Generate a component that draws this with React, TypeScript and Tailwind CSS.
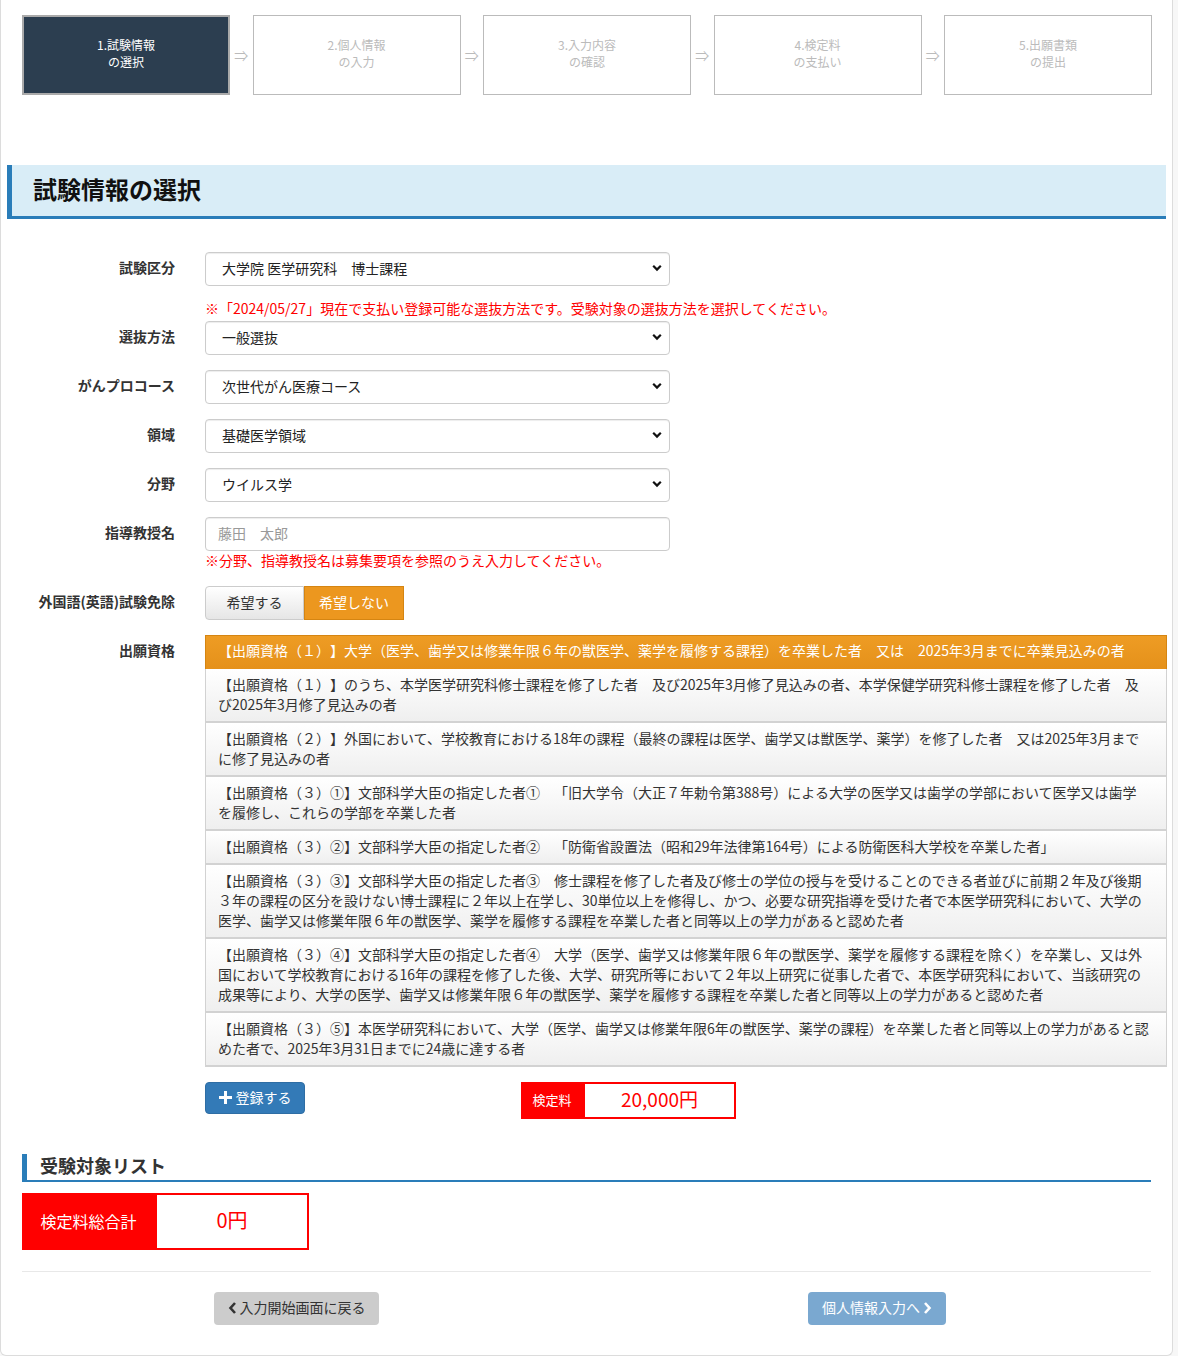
import React from "react";

const font = { fontFamily: '"Noto Sans CJK JP", "Noto Sans", sans-serif' };

function Chevron() {
  return (
    <svg width="10" height="8" viewBox="0 0 10 8" className="shrink-0">
      <path d="M1.2 1.8 L5 5.6 L8.8 1.8" fill="none" stroke="#111" strokeWidth="2.2" />
    </svg>
  );
}

function SelectBox({ value }: { value: string }) {
  return (
    <div className="w-[465px] h-[34px] border border-[#ccc] rounded-[4px] bg-white flex items-center justify-between pl-[16px] pr-[7px] pb-[2px] text-[14px] text-[#222] shadow-[inset_0_1px_1px_rgba(0,0,0,0.075)]">
      <span>{value}</span>
      <Chevron />
    </div>
  );
}

function Label({ children }: { children: React.ReactNode }) {
  return (
    <div className="w-[174px] shrink-0 text-right font-bold text-[14px] text-[#333] leading-[30px]">
      {children}
    </div>
  );
}

const steps = [
  ["1.試験情報", "の選択"],
  ["2.個人情報", "の入力"],
  ["3.入力内容", "の確認"],
  ["4.検定料", "の支払い"],
  ["5.出願書類", "の提出"],
];

const quals: { text: string; active?: boolean }[] = [
  { text: "【出願資格（１）】大学（医学、歯学又は修業年限６年の獣医学、薬学を履修する課程）を卒業した者　又は　2025年3月までに卒業見込みの者", active: true },
  { text: "【出願資格（１）】のうち、本学医学研究科修士課程を修了した者　及び2025年3月修了見込みの者、本学保健学研究科修士課程を修了した者　及び2025年3月修了見込みの者" },
  { text: "【出願資格（２）】外国において、学校教育における18年の課程（最終の課程は医学、歯学又は獣医学、薬学）を修了した者　又は2025年3月までに修了見込みの者" },
  { text: "【出願資格（３）①】文部科学大臣の指定した者①　「旧大学令（大正７年勅令第388号）による大学の医学又は歯学の学部において医学又は歯学\nを履修し、これらの学部を卒業した者" },
  { text: "【出願資格（３）②】文部科学大臣の指定した者②　「防衛省設置法（昭和29年法律第164号）による防衛医科大学校を卒業した者」" },
  { text: "【出願資格（３）③】文部科学大臣の指定した者③　修士課程を修了した者及び修士の学位の授与を受けることのできる者並びに前期２年及び後期３年の課程の区分を設けない博士課程に２年以上在学し、30単位以上を修得し、かつ、必要な研究指導を受けた者で本医学研究科において、大学の医学、歯学又は修業年限６年の獣医学、薬学を履修する課程を卒業した者と同等以上の学力があると認めた者" },
  { text: "【出願資格（３）④】文部科学大臣の指定した者④　大学（医学、歯学又は修業年限６年の獣医学、薬学を履修する課程を除く）を卒業し、又は外国において学校教育における16年の課程を修了した後、大学、研究所等において２年以上研究に従事した者で、本医学研究科において、当該研究の成果等により、大学の医学、歯学又は修業年限６年の獣医学、薬学を履修する課程を卒業した者と同等以上の学力があると認めた者" },
  { text: "【出願資格（３）⑤】本医学研究科において、大学（医学、歯学又は修業年限6年の獣医学、薬学の課程）を卒業した者と同等以上の学力があると認めた者で、2025年3月31日までに24歳に達する者" },
];

export default function App() {
  return (
    <div className="w-full min-h-[1356px] bg-[#f7f7f7] [text-spacing-trim:space-all]" style={font}>
      <div className="w-[1173px] h-[1356px] bg-white border border-t-0 border-[#dcdcdc] rounded-b-[6px] overflow-hidden">
        {/* Steps */}
        <div className="flex items-center pl-[21px] pt-[15px]">
          {steps.map((s, i) => (
            <React.Fragment key={i}>
              {i > 0 && (
                <div className="w-[22.5px] text-center text-[14px] text-[#bbb] leading-none">⇒</div>
              )}
              <div
                className={
                  i === 0
                    ? "w-[208px] h-[80px] border-2 border-[#aaa] bg-[#2c3e50] text-white flex flex-col items-center justify-center pb-[4px] text-[12px] leading-[17px]"
                    : "w-[208px] h-[80px] border border-[#bbb] bg-white text-[#bbb] flex flex-col items-center justify-center pb-[4px] text-[12px] leading-[17px]"
                }
              >
                <div>{s[0]}</div>
                <div>{s[1]}</div>
              </div>
            </React.Fragment>
          ))}
        </div>

        {/* Header */}
        <div className="mt-[70px] ml-[6px] w-[1159px] h-[54px] bg-[#d9edf7] border-l-[5px] border-b-[3px] border-[#2a7db9] flex items-center pl-[21px] pb-[3px]">
          <h1 className="text-[24px] font-bold text-[#111] leading-none">試験情報の選択</h1>
        </div>

        {/* Form */}
        <div className="mt-[33px] flex flex-col">
          <div className="flex gap-[30px]">
            <Label>試験区分</Label>
            <SelectBox value="大学院 医学研究科　博士課程" />
          </div>
          <div className="flex gap-[30px] mt-[12px]">
            <div className="w-[174px] shrink-0" />
            <div className="text-[14px] leading-[20px] text-[#f00]">
              ※「2024/05/27」現在で支払い登録可能な選抜方法です。受験対象の選抜方法を選択してください。
            </div>
          </div>
          <div className="flex gap-[30px] mt-[3px]">
            <Label>選抜方法</Label>
            <SelectBox value="一般選抜" />
          </div>
          <div className="flex gap-[30px] mt-[15px]">
            <Label>がんプロコース</Label>
            <SelectBox value="次世代がん医療コース" />
          </div>
          <div className="flex gap-[30px] mt-[15px]">
            <Label>領域</Label>
            <SelectBox value="基礎医学領域" />
          </div>
          <div className="flex gap-[30px] mt-[15px]">
            <Label>分野</Label>
            <SelectBox value="ウイルス学" />
          </div>
          <div className="flex gap-[30px] mt-[15px]">
            <Label>指導教授名</Label>
            <div className="flex flex-col">
              <div className="w-[465px] h-[34px] border border-[#ccc] rounded-[4px] bg-white flex items-center pl-[12px] pb-[2px] text-[14px] text-[#999] shadow-[inset_0_1px_1px_rgba(0,0,0,0.075)]">
                藤田　太郎
              </div>
              <div className="text-[14px] leading-[18px] text-[#f00]">
                ※分野、指導教授名は募集要項を参照のうえ入力してください。
              </div>
            </div>
          </div>
          <div className="flex gap-[30px] mt-[17px]">
            <Label>外国語(英語)試験免除</Label>
            <div className="flex h-[34px]">
              <div className="w-[99px] h-full border border-[#ccc] rounded-l-[4px] bg-linear-to-b from-white to-[#e6e6e6] text-[#333] text-[14px] flex items-center justify-center pb-[2px]">
                希望する
              </div>
              <div className="w-[100px] h-full border border-[#d58512] bg-[#ec971f] text-white text-[14px] flex items-center justify-center pb-[2px]">
                希望しない
              </div>
            </div>
          </div>
          <div className="flex gap-[30px] mt-[15px]">
            <Label>出願資格</Label>
            <div className="w-[962px] flex flex-col">
              {quals.map((q, i) => (
                <div
                  key={i}
                  className={
                    q.active
                      ? "whitespace-pre-line pl-[12px] pr-[14px] pt-[4px] pb-[9px] text-[14px] leading-[20px] text-white bg-linear-to-b from-[#ee9c24] to-[#e5911a] border border-[#d58512] border-b-0"
                      : "whitespace-pre-line pl-[12px] pr-[14px] pt-[5px] pb-[7px] text-[14px] leading-[20px] text-[#333] bg-linear-to-b from-white to-[#efefef] border-x border-[#d2d2d2] border-b-2"
                  }
                >
                  {q.text}
                </div>
              ))}
            </div>
          </div>
          <div className="flex gap-[30px] mt-[15px]">
            <div className="w-[174px] shrink-0" />
            <div className="flex items-start">
              <div className="w-[100px] h-[32px] bg-[#337ab7] border border-[#2e6da4] rounded-[4px] text-white text-[14px] flex items-center justify-center gap-[4px] pb-[1px]">
                <svg width="13" height="13" viewBox="0 0 13 13">
                  <path d="M5 0h3v5h5v3H8v5H5V8H0V5h5z" fill="#fff" />
                </svg>
                <span>登録する</span>
              </div>
              <div className="ml-[216px] flex h-[37px] w-[215px]">
                <div className="w-[62px] h-full bg-[#f00] text-white text-[13px] flex items-center justify-center pb-[2px]">
                  検定料
                </div>
                <div className="flex-1 h-full border-2 border-[#f00] text-[#f00] text-[19px] flex items-center justify-center pb-[3px]">
                  20,000円
                </div>
              </div>
            </div>
          </div>
        </div>

        {/* Target list */}
        <div className="mx-[21px] mt-[35px]">
          <div className="h-[28px] border-l-[5px] border-b-[2px] border-[#2a7db9] pl-[13px] flex items-center pb-[4px]">
            <h2 className="text-[18px] font-bold text-[#333] leading-none">受験対象リスト</h2>
          </div>
          <div className="mt-[11px] flex h-[57px] w-[287px]">
            <div className="w-[133px] h-full bg-[#f00] text-white text-[16px] flex items-center justify-center pb-[2px]">
              検定料総合計
            </div>
            <div className="flex-1 h-full border-2 border-[#f00] text-[#f00] text-[20px] flex items-center justify-center pb-[3px]">
              0円
            </div>
          </div>
          <div className="mt-[21px] border-t border-[#e8e8e8]" />
          <div className="mt-[20px] flex">
            <div className="ml-[192px] w-[165px] h-[33px] bg-[#ccc] rounded-[4px] text-[#333] text-[14px] flex items-center justify-center gap-[3px] pb-[2px]">
              <svg width="9" height="12" viewBox="0 0 9 12">
                <path d="M7 1 L2.5 6 L7 11" fill="none" stroke="#333" strokeWidth="2.6" />
              </svg>
              <span>入力開始画面に戻る</span>
            </div>
            <div className="ml-[429px] w-[138px] h-[33px] bg-[#7aa8d0] rounded-[4px] text-white text-[14px] flex items-center justify-center gap-[3px] pb-[2px]">
              <span>個人情報入力へ</span>
              <svg width="9" height="12" viewBox="0 0 9 12">
                <path d="M2 1 L6.5 6 L2 11" fill="none" stroke="#fff" strokeWidth="2.6" />
              </svg>
            </div>
          </div>
        </div>
      </div>
    </div>
  );
}
